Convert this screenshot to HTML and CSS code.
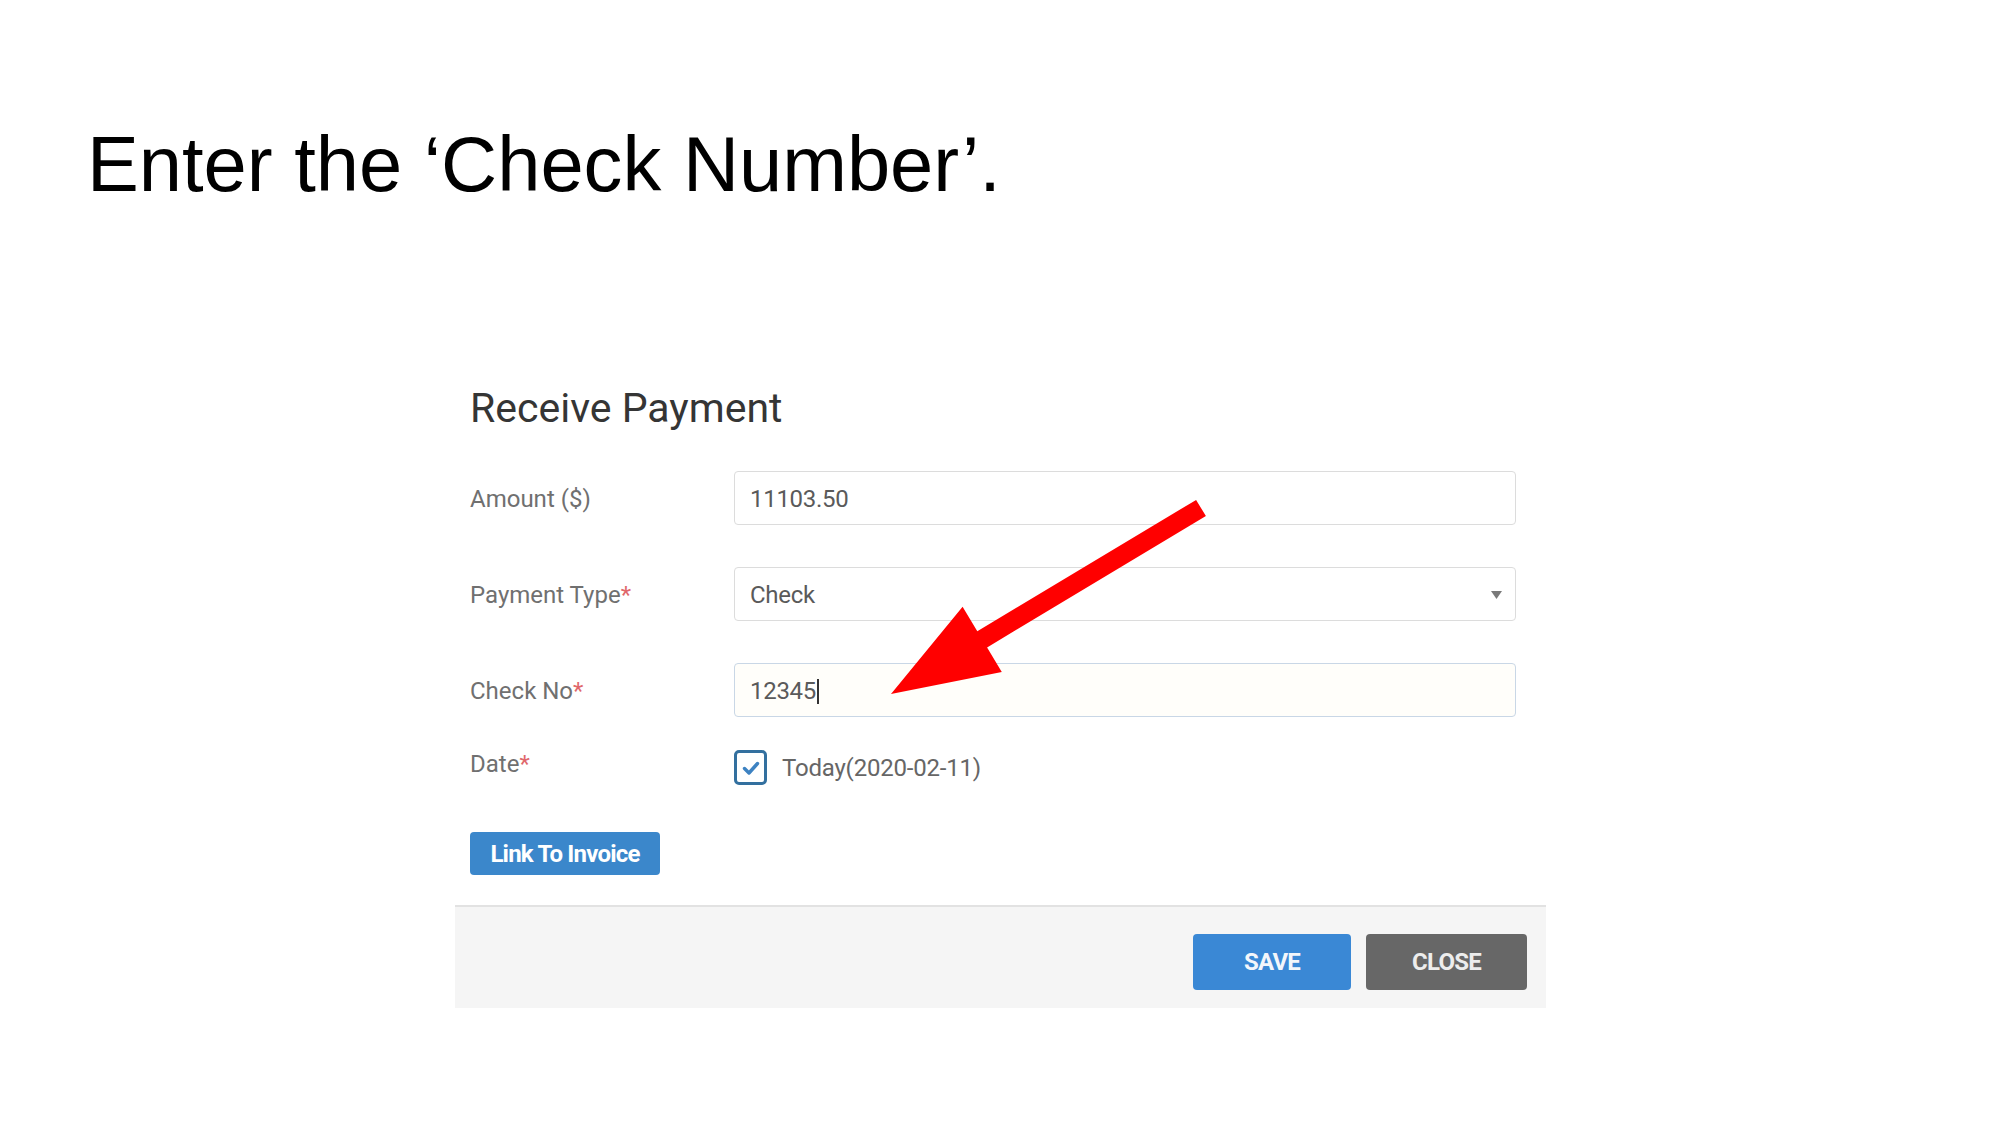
FILE: index.html
```html
<!DOCTYPE html>
<html lang="en">
<head>
<meta charset="utf-8">
<title>Enter the Check Number</title>
<link rel="stylesheet" href="styles.css">
</head>
<body>
<div class="slide">
  <h1 class="slide-title">Enter the ‘Check Number’.</h1>

  <div class="dialog">
    <div class="dialog-body">
      <h2 class="dialog-title">Receive Payment</h2>

      <div class="form-row">
        <div class="label">Amount ($)</div>
        <div class="field">11103.50</div>
      </div>

      <div class="form-row">
        <div class="label">Payment Type<span class="req">*</span></div>
        <div class="field select">
          <span>Check</span>
          <svg class="caret" width="11" height="8" viewBox="0 0 11 8"><path d="M0 0 H11 L5.5 8 Z" fill="#7a7a7a"/></svg>
        </div>
      </div>

      <div class="form-row check-row">
        <div class="label">Check No<span class="req">*</span></div>
        <div class="field focused">12345<span class="cursor"></span></div>
      </div>

      <div class="form-row date-row">
        <div class="label date-label">Date<span class="req">*</span></div>
        <div class="check-wrap">
          <span class="checkbox">
            <svg width="22" height="22" viewBox="0 0 22 22"><path d="M4.5 11.5 L9 16 L17.5 6.5" fill="none" stroke="#3d82c2" stroke-width="3.4" stroke-linecap="round" stroke-linejoin="round"/></svg>
          </span>
          <span class="check-text">Today(2020-02-11)</span>
        </div>
      </div>

      <button class="btn btn-link-invoice">Link To Invoice</button>
    </div>

    <div class="dialog-footer">
      <button class="btn btn-save">SAVE</button>
      <button class="btn btn-close">CLOSE</button>
    </div>
  </div>

  <svg class="annotation" width="2000" height="1125" viewBox="0 0 2000 1125">
    <polygon points="891,694 962.6,606.7 977.3,631.2 1196.1,499.9 1205.9,516.1 987.1,647.4 1001.8,671.9" fill="#ff0000"/>
  </svg>
</div>
</body>
</html>
```

FILE: styles.css
```css
html, body {
  margin: 0;
  padding: 0;
  background: #ffffff;
}

.slide {
  position: relative;
  width: 2000px;
  height: 1125px;
  overflow: hidden;
}

.slide-title {
  margin: 0;
  padding: 125px 0 0 87px;
  font-family: "Liberation Sans", Arial, sans-serif;
  font-weight: normal;
  font-size: 77.7px;
  line-height: 78px;
  color: #000000;
}

.dialog {
  margin: 181px 0 0 455px;
  width: 1091px;
  font-family: Roboto, "Noto Sans", sans-serif;
}

.dialog-body {
  padding: 0 30px 30px 15px;
}

.dialog-title {
  margin: 0 0 39px 0;
  font-size: 41px;
  line-height: 48px;
  font-weight: normal;
  color: #353535;
}

.form-row {
  display: grid;
  grid-template-columns: 264px 782px;
  margin-bottom: 42px;
}

.label {
  font-size: 24px;
  line-height: 51px;
  padding-top: 3px;
  color: #707070;
}

.req {
  color: #e0676b;
}

.field {
  box-sizing: border-box;
  height: 54px;
  border: 1.5px solid #dcdcdc;
  border-radius: 4px;
  padding: 2px 16px 0 15px;
  font-size: 24px;
  line-height: 50px;
  color: #5a5a5a;
  display: flex;
  align-items: center;
  background: #ffffff;
  letter-spacing: -0.3px;
}

.select {
  justify-content: space-between;
  padding-right: 13px;
}

.caret {
  display: block;
}

.focused {
  border-color: #c9d7e6;
  background: #fffefa;
}

.cursor {
  display: inline-block;
  width: 2px;
  height: 25px;
  margin-left: 1px;
  background: #333333;
}

.check-row {
  margin-bottom: 33px;
}

.date-row {
  margin-bottom: 47px;
}

.date-label {
  line-height: 28px;
  padding-top: 0;
}

.check-wrap {
  display: flex;
  align-items: center;
  gap: 15px;
}

.checkbox {
  box-sizing: border-box;
  width: 33px;
  height: 35px;
  border: 3px solid #33709f;
  border-radius: 5px;
  background: #ffffff;
  display: flex;
  align-items: center;
  justify-content: center;
}

.check-text {
  font-size: 24px;
  line-height: 28px;
  color: #666666;
  letter-spacing: -0.2px;
}

.btn {
  font-family: Roboto, "Noto Sans", sans-serif;
  font-weight: bold;
  font-size: 24px;
  border: none;
  border-radius: 4px;
  color: #ffffff;
  cursor: pointer;
  padding: 0;
  letter-spacing: -0.8px;
}

.btn-link-invoice {
  display: block;
  width: 190px;
  height: 43px;
  background: #3b87cb;
}

.dialog-footer {
  border-top: 2px solid #e2e2e2;
  background: #f5f5f5;
  padding: 27px 19px 18px 0;
  display: flex;
  justify-content: flex-end;
  gap: 15px;
}

.btn-save {
  width: 158px;
  height: 56px;
  background: #3a88d5;
  color: #f2f6fb;
}

.btn-close {
  width: 161px;
  height: 56px;
  background: #676767;
  color: #ededed;
}

.annotation {
  position: absolute;
  left: 0;
  top: 0;
  pointer-events: none;
}
```
